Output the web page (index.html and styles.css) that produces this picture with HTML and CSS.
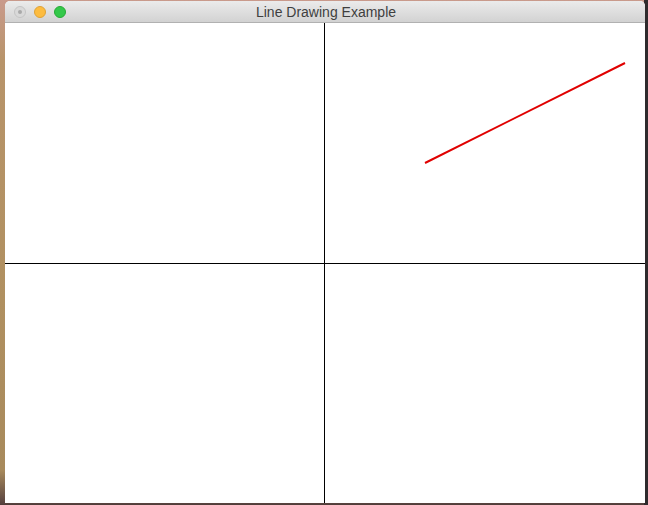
FILE: index.html
```html
<!DOCTYPE html>
<html>
<head>
<meta charset="utf-8">
<title>Line Drawing Example</title>
<link rel="stylesheet" href="styles.css">
</head>
<body>
<div class="desktop">
  <div class="window">
    <div class="titlebar">
      <div class="lights">
        <span class="light close"><span class="dot"></span></span>
        <span class="light min"></span>
        <span class="light max"></span>
      </div>
      <div class="title">Line Drawing Example</div>
    </div>
    <div class="canvas">
      <div class="cell"></div>
      <div class="cell">
        <svg class="drawing" width="320" height="240" viewBox="0 0 320 240">
          <line x1="100" y1="140" x2="300" y2="40" stroke="#e00000" stroke-width="2"/>
        </svg>
      </div>
      <div class="cell"></div>
      <div class="cell"></div>
    </div>
  </div>
</div>
</body>
</html>
```
FILE: styles.css
```css
html, body {
  margin: 0;
  padding: 0;
}
body {
  width: 648px;
  height: 505px;
  overflow: hidden;
  font-family: "Liberation Sans", Arial, sans-serif;
}
.desktop {
  width: 648px;
  height: 505px;
  padding: 1px 3px 0 5px;
  box-sizing: border-box;
  background:
    linear-gradient(to right, transparent 0, transparent 644px, #2f2b2d 644px),
    linear-gradient(to bottom, #c99a8c 0, #b8946a 60px, #b09060 300px, #a88a5c 470px, #5a4440 503px, #4e3c38 505px);
}
.window {
  width: 640px;
  height: 502px;
  display: flex;
  flex-direction: column;
  background: #fff;
  border-radius: 5px 5px 0 0;
  overflow: hidden;
}
.titlebar {
  position: relative;
  height: 21px;
  flex: none;
  background: linear-gradient(to bottom, #ebebeb 0%, #dcdcdc 60%, #d2d2d2 100%);
  border-bottom: 1px solid #b1b1b1;
  display: flex;
  align-items: center;
  justify-content: center;
}
.lights {
  position: absolute;
  left: 9px;
  top: 5px;
  display: flex;
  gap: 8px;
}
.light {
  width: 12px;
  height: 12px;
  border-radius: 50%;
  box-sizing: border-box;
  display: flex;
  align-items: center;
  justify-content: center;
}
.close {
  background: #d9d9d9;
  border: 1px solid #c4c4c4;
}
.close .dot {
  width: 4px;
  height: 4px;
  border-radius: 50%;
  background: #a9a9a9;
}
.min {
  background: #fdbc40;
  border: 1px solid #dea236;
}
.max {
  background: #34c84a;
  border: 1px solid #27aa35;
}
.title {
  font-size: 14px;
  color: #3f3f3f;
  margin-top: 1px;
  margin-left: 2px;
}
.canvas {
  flex: 1;
  display: grid;
  grid-template-columns: 319px 320px;
  grid-template-rows: 240px 239px;
  gap: 1px;
  background: #000;
}
.cell {
  background: #fff;
  overflow: hidden;
}
.drawing {
  display: block;
}
```
